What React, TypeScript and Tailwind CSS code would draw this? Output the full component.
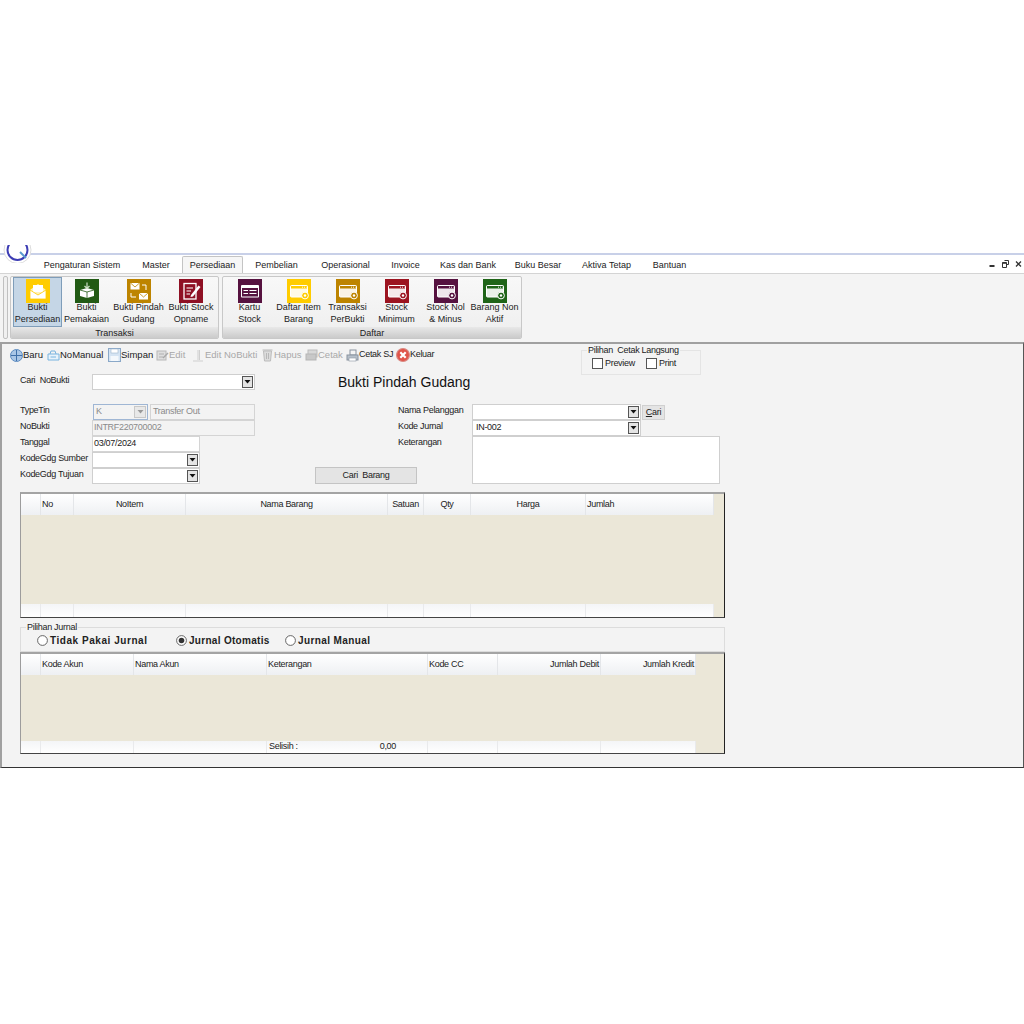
const tabs = [
  { label: "Pengaturan Sistem", w: "w-[96px]" },
  { label: "Master", w: "w-[52px]" },
  { label: "Persediaan", w: "w-[61px]", active: true },
  { label: "Pembelian", w: "w-[67px]" },
  { label: "Operasional", w: "w-[71px]" },
  { label: "Invoice", w: "w-[49px]" },
  { label: "Kas dan Bank", w: "w-[76px]" },
  { label: "Buku Besar", w: "w-[64px]" },
  { label: "Aktiva Tetap", w: "w-[73px]" },
  { label: "Bantuan", w: "w-[53px]" },
];

function Tile({ bg, children }: { bg: string; children: React.ReactNode }) {
  return (
    <svg width="24" height="24" viewBox="0 0 24 24" className="shrink-0">
      <rect width="24" height="24" fill={bg} />
      {children}
    </svg>
  );
}

function CardGlyph({ bg }: { bg: string }) {
  return (
    <Tile bg={bg}>
      <rect x="3.5" y="6.5" width="17" height="11.5" rx="1" fill="#fff" fillOpacity="0.9" stroke="#fff" />
      <rect x="4" y="7" width="16" height="2.5" fill={bg} />
      <path d="M15 8.2 H16 M17 8.2 H18 M19 8.2 H19.6" stroke="#fff" strokeWidth="0.9" />
      <circle cx="18" cy="16.5" r="3.4" fill={bg} stroke="#fff" strokeWidth="1" />
      <circle cx="18" cy="16.5" r="1.2" fill="#fff" />
    </Tile>
  );
}

const ribbonTransaksi = [
  {
    lines: ["Bukti", "Persediaan"],
    w: "w-[49px]",
    selected: true,
    icon: (
      <Tile bg="#ffcc00">
        <path d="M4 11 L12 5 L20 11 V20 H4 Z" fill="#fff2b8" />
        <rect x="7" y="6" width="10" height="7" fill="#fff" />
        <path d="M4 11 L12 16 L20 11 V20 H4 Z" fill="#fff" stroke="#ffcc00" strokeWidth="0.8" />
      </Tile>
    ),
  },
  {
    lines: ["Bukti", "Pemakaian"],
    w: "w-[49px]",
    icon: (
      <Tile bg="#225a14">
        <path d="M5 11 L12 9 L19 11 V17 L12 19 L5 17 Z" fill="#fff" />
        <path d="M5 11 L12 13 L19 11 M12 13 V19" stroke="#225a14" strokeWidth="0.8" fill="none" />
        <path d="M12 3.5 V9 M9.5 7 L12 9.5 L14.5 7" stroke="#cfe0c8" strokeWidth="1.2" fill="none" />
      </Tile>
    ),
  },
  {
    lines: ["Bukti Pindah", "Gudang"],
    w: "w-[55px]",
    icon: (
      <Tile bg="#bd8400">
        <rect x="3.5" y="4" width="9" height="6.5" fill="#fff" />
        <path d="M3.5 4 L8 8 L12.5 4" stroke="#bd8400" strokeWidth="0.8" fill="none" />
        <rect x="12" y="14" width="9" height="6.5" fill="#fff" />
        <path d="M12 14 L16.5 18 L21 14" stroke="#bd8400" strokeWidth="0.8" fill="none" />
        <path d="M15 6 H19 V11 M4 14 V18 H9" stroke="#fff" strokeWidth="1" fill="none" />
      </Tile>
    ),
  },
  {
    lines: ["Bukti Stock", "Opname"],
    w: "w-[50px]",
    icon: (
      <Tile bg="#8f1024">
        <rect x="5" y="4.5" width="12" height="15.5" fill="none" stroke="#fff" strokeWidth="1.3" />
        <path d="M7.5 9 H14 M7.5 12 H12 M7.5 15 H11" stroke="#fff" strokeWidth="1.1" />
        <path d="M12 16 L19.5 6.5 L21.5 8 L14 17.5 L11.5 18 Z" fill="#fff" />
      </Tile>
    ),
  },
];

const ribbonDaftar = [
  {
    lines: ["Kartu", "Stock"],
    icon: (
      <Tile bg="#561240">
        <rect x="3" y="6" width="18" height="12.5" rx="1" fill="#fff" />
        <rect x="4" y="9" width="16" height="8.5" fill="#561240" />
        <path d="M5.5 11.5 H10 M5.5 14.5 H10 M11.5 11.5 H18.5 M11.5 14.5 H18.5" stroke="#fff" strokeWidth="1" />
      </Tile>
    ),
  },
  { lines: ["Daftar Item", "Barang"], icon: <CardGlyph bg="#ffcc00" /> },
  { lines: ["Transaksi", "PerBukti"], icon: <CardGlyph bg="#bd8400" /> },
  { lines: ["Stock", "Minimum"], icon: <CardGlyph bg="#9c1420" /> },
  { lines: ["Stock Nol", "& Minus"], icon: <CardGlyph bg="#561240" /> },
  { lines: ["Barang Non", "Aktif"], icon: <CardGlyph bg="#1f6418" /> },
];

function RibbonButton({ lines, icon, w, selected }: { lines: string[]; icon: React.ReactNode; w?: string; selected?: boolean }) {
  return (
    <div
      className={`flex h-[50px] flex-col items-center pt-[1px] leading-[11.5px] whitespace-nowrap ${w ?? "w-[49px]"} ${
        selected ? "border border-[#7f9db9] bg-[#c5d6e6]" : "border border-transparent"
      }`}
    >
      {icon}
      <span className="mt-[-1px]">{lines[0]}</span>
      <span>{lines[1]}</span>
    </div>
  );
}

function RibbonGroup({ title, className, children }: { title: string; className: string; children: React.ReactNode }) {
  return (
    <div className={`flex h-[63px] flex-col overflow-hidden rounded-[2px] border border-[#c8c8c8] bg-gradient-to-b from-[#f8f8f8] to-[#eeeeee] ${className}`}>
      <div className="flex h-[50px] pl-[2px]">{children}</div>
      <div className="flex h-[12px] items-center justify-center bg-gradient-to-b from-[#e8e8e8] to-[#c8c8c8] leading-[12px]">{title}</div>
    </div>
  );
}

type ToolItem = { label: string; w: string; disabled?: boolean; tight?: boolean; icon: React.ReactNode };

const toolItems: ToolItem[] = [
  {
    label: "Baru",
    w: "w-[37px]",
    icon: (
      <svg width="13" height="13" viewBox="0 0 13 13">
        <circle cx="6.5" cy="6.5" r="6" fill="#a9c6e6" stroke="#5d8cc0" />
        <path d="M6.5 1 V12 M1 6.5 H12" stroke="#3f6fa8" strokeWidth="1" />
      </svg>
    ),
  },
  {
    label: "NoManual",
    w: "w-[61px]",
    icon: (
      <svg width="13" height="13" viewBox="0 0 13 13">
        <path d="M1 5 H12 V11 H1 Z" fill="#e8f3fb" stroke="#79b4df" />
        <path d="M3 5 L4 2 H8 L9 5 M3.5 8 H9" stroke="#79b4df" fill="none" />
      </svg>
    ),
  },
  {
    label: "Simpan",
    w: "w-[48px]",
    icon: (
      <svg width="13" height="14" viewBox="0 0 13 14">
        <rect x="0.5" y="0.5" width="12" height="13" fill="#d5e4f3" stroke="#8aa8c8" />
        <rect x="3" y="1" width="7" height="4" fill="#fff" stroke="#9db4cc" strokeWidth="0.6" />
        <rect x="2.5" y="8" width="8" height="5" fill="#f4f8fc" />
      </svg>
    ),
  },
  {
    label: "Edit",
    w: "w-[36px]",
    disabled: true,
    icon: (
      <svg width="13" height="13" viewBox="0 0 13 13">
        <rect x="1" y="2" width="9" height="9" fill="#dedede" stroke="#b8b8b8" />
        <path d="M3 5 H8 M3 8 H7" stroke="#b0b0b0" />
        <path d="M7 9 L12 4" stroke="#a8a8a8" strokeWidth="1.5" />
      </svg>
    ),
  },
  {
    label: "Edit NoBukti",
    w: "w-[69px]",
    disabled: true,
    icon: (
      <svg width="13" height="13" viewBox="0 0 13 13">
        <path d="M6 1 V11 M7.5 1 V11 M1 12 H11" stroke="#cfcfcf" strokeWidth="1" />
      </svg>
    ),
  },
  {
    label: "Hapus",
    w: "w-[44px]",
    disabled: true,
    icon: (
      <svg width="13" height="14" viewBox="0 0 12 14">
        <path d="M2 3 H10 L9 13 H3 Z" fill="#dcdcdc" stroke="#bcbcbc" />
        <path d="M1 2 H11 M5 5 V11 M7 5 V11" stroke="#b8b8b8" />
      </svg>
    ),
  },
  {
    label: "Cetak",
    w: "w-[41px]",
    disabled: true,
    icon: (
      <svg width="13" height="13" viewBox="0 0 13 13">
        <rect x="3" y="1" width="9" height="7" fill="#d8d8d8" stroke="#bbb" />
        <rect x="1" y="5" width="10" height="6" fill="#c8c8c8" stroke="#b5b5b5" />
      </svg>
    ),
  },
  {
    label: "Cetak SJ",
    w: "w-[50px]",
    tight: true,
    icon: (
      <svg width="13" height="13" viewBox="0 0 13 13">
        <rect x="4" y="1" width="6" height="5" fill="#f4f4f4" stroke="#8a94a0" />
        <rect x="1" y="6" width="11" height="5" fill="#b7c0ca" stroke="#8a94a0" />
        <rect x="3" y="9" width="7" height="3" fill="#fff" stroke="#8a94a0" strokeWidth="0.6" />
      </svg>
    ),
  },
  {
    label: "Keluar",
    w: "w-[45px]",
    tight: true,
    icon: (
      <svg width="14" height="14" viewBox="0 0 13 13">
        <circle cx="6.5" cy="6.5" r="6" fill="#e0544a" stroke="#d98a84" />
        <path d="M4 4 L9 9 M9 4 L4 9" stroke="#fff" strokeWidth="2" />
      </svg>
    ),
  },
];

function DropArrow() {
  return (
    <span className="flex h-[12px] w-[11px] shrink-0 items-center justify-center border border-[#555] bg-[#e4e4e4]">
      <svg width="7" height="4" viewBox="0 0 7 4">
        <path d="M0.5 0 H6.5 L3.5 3.5 Z" fill="#111" />
      </svg>
    </span>
  );
}

function Combo({ w, value }: { w: string; value?: string }) {
  return (
    <div className={`flex h-[16px] items-center justify-between border border-[#cfcfcf] bg-white pr-[1px] pl-[3px] ${w}`}>
      <span>{value}</span>
      <DropArrow />
    </div>
  );
}

function Field({ w, value, muted }: { w: string; value: string; muted?: boolean }) {
  return (
    <div className={`flex h-[16px] items-center border border-[#d4d4d4] pl-[1px] ${muted ? "text-[#8a8a8a]" : "bg-white"} ${w}`}>
      {value}
    </div>
  );
}

function Label({ w, children }: { w: string; children: React.ReactNode }) {
  return <span className={`pb-[3px] whitespace-nowrap ${w}`}>{children}</span>;
}

function Box({ checked, radio }: { checked?: boolean; radio?: boolean }) {
  if (radio) {
    return (
      <svg width="11" height="11" viewBox="0 0 11 11" className="shrink-0">
        <circle cx="5.5" cy="5.5" r="4.9" fill="#fff" stroke="#555" strokeWidth="0.9" />
        {checked && <circle cx="5.5" cy="5.5" r="2.8" fill="#333" />}
      </svg>
    );
  }
  return <span className="h-[11px] w-[11px] shrink-0 border border-[#555] bg-white" />;
}

type Col = { label?: string; w: string; align?: string; footer?: React.ReactNode };

function Grid({ cols, width, height, bodyH, footH }: { cols: Col[]; width: string; height: string; bodyH: string; footH: string }) {
  return (
    <div className={`ml-[18px] w-[705px] border-t-2 border-r border-b border-l border-t-[#a4a4a4] border-r-[#222] border-b-[#444] border-l-[#9c9c9c] bg-[#ebe7d8] ${height}`}>
      <div className={`flex h-[21px] bg-gradient-to-b from-white to-[#eef0f3] ${width}`}>
        {cols.map((c, i) => (
          <div key={i} className={`flex items-center border-r border-[#e4e6e9] px-[1px] pt-[1px] ${c.align ?? "justify-start"} ${c.w}`}>
            {c.label}
          </div>
        ))}
      </div>
      <div className={bodyH} />
      <div className={`flex bg-gradient-to-b from-[#f4f5f7] to-white ${footH} ${width}`}>
        {cols.map((c, i) => (
          <div key={i} className={`flex items-center border-r border-[#e9eaec] ${c.w}`}>
            {c.footer}
          </div>
        ))}
      </div>
    </div>
  );
}

const itemCols: Col[] = [
  { w: "w-[20px]" },
  { label: "No", w: "w-[33px]" },
  { label: "NoItem", w: "w-[112px]", align: "justify-center" },
  { label: "Nama Barang", w: "w-[202px]", align: "justify-center" },
  { label: "Satuan", w: "w-[36px]", align: "justify-center" },
  { label: "Qty", w: "w-[47px]", align: "justify-center" },
  { label: "Harga", w: "w-[115px]", align: "justify-center" },
  { label: "Jumlah", w: "w-[128px]" },
];

const jurnalCols: Col[] = [
  { w: "w-[20px]" },
  { label: "Kode Akun", w: "w-[93px]" },
  { label: "Nama Akun", w: "w-[133px]" },
  {
    label: "Keterangan",
    w: "w-[161px]",
    footer: (
      <div className="flex w-full justify-between pr-[31px] pl-[2px]">
        <span>Selisih :</span>
        <span>0,00</span>
      </div>
    ),
  },
  { label: "Kode CC", w: "w-[70px]" },
  { label: "Jumlah Debit", w: "w-[103px]", align: "justify-end" },
  { label: "Jumlah Kredit", w: "w-[95px]", align: "justify-end" },
];

export default function App() {
  return (
    <div className="min-h-[1024px] bg-white pt-[253px] font-['Liberation_Sans',sans-serif] text-[9px] text-[#222]">
      <div className="relative h-[515px] w-[1024px]">
        <svg width="34" height="18" viewBox="0 0 34 18" className="absolute top-[-8px] left-0 z-10">
          <circle cx="17.5" cy="5" r="13.5" fill="#fff" stroke="#dcdcdc" />
          <circle cx="17.5" cy="5" r="10" fill="#fff" stroke="#3d3db4" strokeWidth="2" />
          <path d="M20 7 L26 13" stroke="#5a9ad0" strokeWidth="2" />
        </svg>

        <div className="h-[2px] bg-[#c8d0e8]" />

        <div className="flex h-[18px] items-end bg-white pl-[34px]">
          {tabs.map((t) => (
            <div
              key={t.label}
              className={`flex items-center justify-center pt-[1px] ${t.w} ${
                t.active ? "h-[17px] rounded-t-[2px] border-x border-t border-[#c4c4c4] bg-[#f6f6f6]" : "h-[16px]"
              }`}
            >
              {t.label}
            </div>
          ))}
          <div className="ml-auto flex items-center gap-[6px] self-center pr-[2px]">
            <svg width="7" height="8" viewBox="0 0 7 8">
              <rect x="0.5" y="5" width="5" height="2" fill="#333" />
            </svg>
            <svg width="7" height="8" viewBox="0 0 7 8">
              <path d="M2.5 0.5 H6.5 V4.5 H5 M0.5 2.5 H4.5 V7.5 H0.5 Z" stroke="#333" fill="#fff" />
              <rect x="0.5" y="2.5" width="4" height="1.3" fill="#333" />
            </svg>
            <svg width="7" height="8" viewBox="0 0 7 8">
              <path d="M1 1.5 L6 6.5 M6 1.5 L1 6.5" stroke="#333" strokeWidth="1.3" />
            </svg>
          </div>
        </div>

        <div className="flex h-[69px] items-start gap-[2px] border-t border-[#d4d4d4] bg-[#f4f4f4] pt-[2px] pl-[3px]">
          <div className="h-[63px] w-[5px] rounded-[2px] border border-[#c0c0c0] bg-[#f0f0f0]" />
          <RibbonGroup title="Transaksi" className="w-[209px]">
            {ribbonTransaksi.map((b) => (
              <RibbonButton key={b.lines.join(" ")} {...b} />
            ))}
          </RibbonGroup>
          <RibbonGroup title="Daftar" className="ml-[1px] w-[300px]">
            {ribbonDaftar.map((b) => (
              <RibbonButton key={b.lines.join(" ")} {...b} />
            ))}
          </RibbonGroup>
        </div>

        <div className="h-[426px] border-t-2 border-r border-b border-l-2 border-t-[#a0a0a0] border-r-[#555] border-b-[#333] border-l-[#a0a0a0] bg-[#f3f3f3] tracking-[-0.3px]">
          <div className="flex h-[30px]">
            <div className="mt-[3px] flex h-[16px] w-[579px] items-center pl-[8px] text-[9.5px] tracking-normal">
              {toolItems.map((t) => (
                <div key={t.label} className={`flex items-center whitespace-nowrap ${t.w} ${t.disabled ? "text-[#a8a8a8]" : ""}`}>
                  {t.icon}
                  <span className={t.tight ? "text-[9px] tracking-[-0.3px]" : ""}>{t.label}</span>
                </div>
              ))}
            </div>
            <fieldset className="mt-[1px] h-[30px] w-[120px] border border-[#e4e4e4] px-[10px]">
              <legend className="ml-[-5px] px-[1px] leading-[10px] whitespace-nowrap">Pilihan&nbsp; Cetak Langsung</legend>
              <div className="mt-[2px] flex items-center">
                <Box />
                <span className="ml-[2px] w-[41px]">Preview</span>
                <Box />
                <span className="ml-[2px]">Print</span>
              </div>
            </fieldset>
          </div>

          <div className="flex h-[30px] pl-[18px]">
            <span className="w-[72px]">Cari&nbsp; NoBukti</span>
            <Combo w="w-[163px]" />
            <span className="ml-[83px] text-[14px] leading-[16px] tracking-normal text-[#111]">Bukti Pindah Gudang</span>
          </div>

          <div className="flex h-[80px] pl-[18px]">
            <div className="flex w-[235px] flex-col">
              <div className="flex h-[16px] items-center">
                <Label w="w-[73px]">TypeTin</Label>
                <div className="flex h-[16px] w-[55px] items-center justify-between border border-[#9fb6d4] pr-[1px] pl-[2px] text-[#8a8a8a]">
                  K
                  <span className="flex h-[12px] w-[12px] items-center justify-center border border-[#c8c8c8] bg-[#e8e8e8]">
                    <svg width="7" height="4" viewBox="0 0 7 4">
                      <path d="M0.5 0 H6.5 L3.5 3.5 Z" fill="#999" />
                    </svg>
                  </span>
                </div>
                <div className="ml-[2px]">
                  <Field w="w-[105px] pl-[2px]" value="Transfer Out" muted />
                </div>
              </div>
              <div className="flex h-[16px] items-center">
                <Label w="w-[72px]">NoBukti</Label>
                <Field w="w-[163px]" value="INTRF220700002" muted />
              </div>
              <div className="flex h-[16px] items-center">
                <Label w="w-[72px]">Tanggal</Label>
                <Field w="w-[108px]" value="03/07/2024" />
              </div>
              <div className="flex h-[16px] items-center">
                <Label w="w-[72px]">KodeGdg Sumber</Label>
                <Combo w="w-[108px]" />
              </div>
              <div className="flex h-[16px] items-center">
                <Label w="w-[72px]">KodeGdg Tujuan</Label>
                <Combo w="w-[108px]" />
              </div>
            </div>

            <div className="flex w-[143px] flex-col justify-end">
              <button className="ml-[60px] h-[17px] w-[102px] border border-[#c4c4c4] bg-[#e4e4e4] text-[9px]">
                Cari&nbsp; Barang
              </button>
            </div>

            <div className="flex flex-col">
              <div className="flex h-[16px] items-center">
                <Label w="w-[74px]">Nama Pelanggan</Label>
                <Combo w="w-[169px]" />
                <button className="ml-[1px] h-[15px] w-[23px] border border-[#d0d0d0] bg-[#e4e4e4] text-[9px]">
                  <span className="underline">C</span>ari
                </button>
              </div>
              <div className="flex h-[16px] items-center">
                <Label w="w-[74px]">Kode Jurnal</Label>
                <Combo w="w-[169px]" value="IN-002" />
              </div>
              <div className="flex h-[48px]">
                <span className="w-[74px]">Keterangan</span>
                <div className="h-[48px] w-[248px] border border-[#cfcfcf] bg-white" />
              </div>
            </div>
          </div>

          <div className="mt-[8px]">
            <Grid cols={itemCols} width="w-[693px]" height="h-[126px]" bodyH="h-[89px]" footH="h-[13px]" />
          </div>

          <fieldset className="mt-[4px] ml-[18px] h-[30px] w-[705px] border border-[#dcdcdc] px-[5px]">
            <legend className="px-[1px] leading-[10px]">Pilihan Jurnal</legend>
            <div className="mt-[1px] flex items-center pl-[11px] text-[10px] font-bold text-[#222]">
              <Box radio />
              <span className="ml-[2px] w-[126px] tracking-[0.55px]">Tidak Pakai Jurnal</span>
              <Box radio checked />
              <span className="ml-[2px] w-[96px] tracking-[0.3px]">Jurnal Otomatis</span>
              <Box radio />
              <span className="ml-[2px] tracking-[0.4px]">Jurnal Manual</span>
            </div>
          </fieldset>

          <Grid cols={jurnalCols} width="w-[675px]" height="h-[102px]" bodyH="h-[66px]" footH="h-[12px]" />
        </div>
      </div>
    </div>
  );
}
